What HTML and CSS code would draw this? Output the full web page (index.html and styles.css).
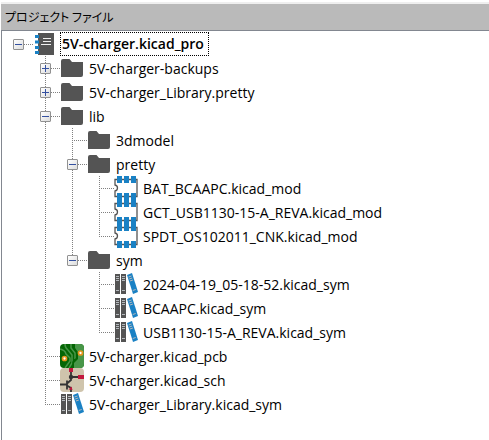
FILE: index.html
```html
<!DOCTYPE html>
<html lang="ja">
<head>
<meta charset="utf-8">
<title>プロジェクト ファイル</title>
<link rel="stylesheet" href="styles.css">
</head>
<body>
<svg class="sprite" aria-hidden="true">
  <symbol id="plus" viewBox="0 0 9 9"><path d="M1 4h7v1H1zM4 1h1v7H4z" fill="#3450a0"/></symbol>
  <symbol id="minus" viewBox="0 0 9 9"><path d="M1 4h7v1H1z" fill="#3450a0"/></symbol>
  <symbol id="folder" viewBox="0 0 24 24"><path d="M1 5q0-2 2-2h6.500l2.500 3H23v13q0 2-2 2H1z" fill="#545454"/></symbol>
  <symbol id="notebook" viewBox="0 0 24 24">
    <path d="M5 1h16v22H5z" fill="#545454"/>
    <path d="M2 3h4v3H2zM2 8.500h4v3H2zM2 14h4v3H2zM2 19h4v3H2z" fill="#1a81c4"/>
    <path d="M10 6.500h8M10 9.500h8M8 12.500h10" stroke="#f0f0f0" fill="none"/>
  </symbol>
  <symbol id="footprint" viewBox="0 0 24 24">
    <path d="M1 3.500h22v17H1V15q2.500-.5 2.500-3T1 9z" fill="#fff" stroke="#545454" stroke-width="1.300"/>
    <path d="M3 0h5v7H3zM10 0h5v7h-5zM17 0h5v7h-5zM3 17h5v7H3zM10 17h5v7h-5zM17 17h5v7h-5z" fill="#1a81c4"/>
  </symbol>
  <symbol id="books" viewBox="0 0 24 24">
    <path d="M1 2h5v20H1zM7 2h5v20H7z" fill="#545454"/>
    <path d="M13 3l5-2 6 19-5 2z" fill="#1a81c4"/>
    <path d="M2 4.500h3M2 6.500h3M2 8.500h3M2 18.500h3M8 4.500h3M8 6.500h3M8 8.500h3M8 18.500h3M14.500 5l3-1M15.200 7l3-1M15.900 9l3-1M18.700 18.500l3-1" stroke="#b4b8bc" fill="none"/>
  </symbol>
  <symbol id="board" viewBox="0 0 24 24">
    <clipPath id="board-edge"><rect width="24" height="24" rx="4"/></clipPath>
    <g clip-path="url(#board-edge)">
      <path d="M0 0h24v24H0z" fill="#056605"/>
      <path d="M24 0H15v4q0 2 2 4l1 2v5l-4 4v5h10z" fill="#489648"/>
      <path d="M0 5q5 1 6 5l4 4v3l-5 7M5 0q0 4 3 6l4 5v8l-3 5M11 0v4l4 5v6" fill="none" stroke="#489648" stroke-width="1.500"/>
      <path d="M14 0v4l3 4v6l-4 4v6" fill="none" stroke="#056605" stroke-width="1.500"/>
      <circle cx="4.500" cy="14.500" r="2" fill="#fff" stroke="#e6951d" stroke-width="1.700"/>
      <circle cx="20.500" cy="9" r="2" fill="#fff" stroke="#e6951d" stroke-width="1.700"/>
    </g>
  </symbol>
  <symbol id="schematic" viewBox="0 0 24 24">
    <rect width="24" height="24" rx="4" fill="#cfc4ac"/>
    <path d="M11 3v9l-4 3.500M11 9h8M0 16.500h7M7 12.500v9M7 17.500l4 2.500v4" fill="none" stroke="#333" stroke-width="1.800"/>
    <circle cx="11" cy="9" r="2.200" fill="#333"/>
    <path d="M9 0h4v4H9zM18 7h6v4h-6zM11.500 18.500l1 3.500-4-.5z" fill="#c2183d"/>
  </symbol>
</svg>

<main class="panel">
  <h1 class="caption">プロジェクト ファイル</h1>
  <ul class="tree">
    <li>
      <div class="row"><span class="stem"><button class="toggle" aria-label="5V-charger.kicad_pro"><svg><use href="#minus"/></svg></button></span><svg class="icon"><use href="#notebook"/></svg><span class="label selected">5V-charger.kicad_pro</span></div>
      <ul>
        <li><div class="row"><span class="stem"><button class="toggle" aria-label="5V-charger-backups"><svg><use href="#plus"/></svg></button></span><svg class="icon"><use href="#folder"/></svg><span class="label">5V-charger-backups</span></div></li>
        <li><div class="row"><span class="stem"><button class="toggle" aria-label="5V-charger_Library.pretty"><svg><use href="#plus"/></svg></button></span><svg class="icon"><use href="#folder"/></svg><span class="label">5V-charger_Library.pretty</span></div></li>
        <li>
          <div class="row"><span class="stem"><button class="toggle" aria-label="lib"><svg><use href="#minus"/></svg></button></span><svg class="icon"><use href="#folder"/></svg><span class="label">lib</span></div>
          <ul>
            <li><div class="row"><span class="stem"></span><svg class="icon"><use href="#folder"/></svg><span class="label">3dmodel</span></div></li>
            <li>
              <div class="row"><span class="stem"><button class="toggle" aria-label="pretty"><svg><use href="#minus"/></svg></button></span><svg class="icon"><use href="#folder"/></svg><span class="label">pretty</span></div>
              <ul>
                <li><div class="row"><span class="stem"></span><svg class="icon"><use href="#footprint"/></svg><span class="label">BAT_BCAAPC.kicad_mod</span></div></li>
                <li><div class="row"><span class="stem"></span><svg class="icon"><use href="#footprint"/></svg><span class="label">GCT_USB1130-15-A_REVA.kicad_mod</span></div></li>
                <li><div class="row"><span class="stem"></span><svg class="icon"><use href="#footprint"/></svg><span class="label">SPDT_OS102011_CNK.kicad_mod</span></div></li>
              </ul>
            </li>
            <li>
              <div class="row"><span class="stem"><button class="toggle" aria-label="sym"><svg><use href="#minus"/></svg></button></span><svg class="icon"><use href="#folder"/></svg><span class="label">sym</span></div>
              <ul>
                <li><div class="row"><span class="stem"></span><svg class="icon"><use href="#books"/></svg><span class="label">2024-04-19_05-18-52.kicad_sym</span></div></li>
                <li><div class="row"><span class="stem"></span><svg class="icon"><use href="#books"/></svg><span class="label">BCAAPC.kicad_sym</span></div></li>
                <li><div class="row"><span class="stem"></span><svg class="icon"><use href="#books"/></svg><span class="label">USB1130-15-A_REVA.kicad_sym</span></div></li>
              </ul>
            </li>
          </ul>
        </li>
        <li><div class="row"><span class="stem"></span><svg class="icon"><use href="#board"/></svg><span class="label">5V-charger.kicad_pcb</span></div></li>
        <li><div class="row"><span class="stem"></span><svg class="icon"><use href="#schematic"/></svg><span class="label">5V-charger.kicad_sch</span></div></li>
        <li><div class="row"><span class="stem"></span><svg class="icon"><use href="#books"/></svg><span class="label">5V-charger_Library.kicad_sym</span></div></li>
      </ul>
    </li>
  </ul>
</main>
</body>
</html>
```
FILE: styles.css
```css
* {
  box-sizing: border-box;
}

body {
  margin: 0;
  background: #fff;
  color: #000;
  font: 14px/20px "Open Sans", "Noto Sans CJK JP", sans-serif;
}

.sprite {
  display: block;
  width: 0;
  height: 0;
}

.panel {
  display: flex;
  flex-direction: column;
  min-height: 100vh;
  padding: 2px 0 0 1px;
}

.caption {
  margin: 0;
  padding: 0 4px;
  border-top: 2px solid #efefef;
  background: #bababa;
  font: 12px/26px "Noto Sans CJK JP", sans-serif;
  font-feature-settings: "palt";
}

.tree {
  flex: 1;
  padding: 1px 4px;
  border-top: 1px solid #828790;
  border-left: 1px solid #828790;
}

ul {
  margin: 0;
  padding: 0;
  list-style: none;
}

ul ul {
  padding-left: 27px;
}

/* Dotted guide that runs down beside the siblings */
ul ul > li {
  background: repeating-linear-gradient(#808080 0 1px, transparent 1px 2px) 12px 0 / 1px 100% no-repeat;
}

ul ul > li:last-child {
  background-size: 1px 12px;
}

.row {
  display: flex;
  align-items: center;
  height: 24px;
}

.stem {
  display: flex;
  align-items: center;
  width: 27px;
  height: 24px;
  padding: 1px 0 0 7px;
  background: repeating-linear-gradient(90deg, #808080 0 1px, transparent 1px 2px) 12px 12px / 15px 1px no-repeat;
}

.toggle {
  width: 11px;
  height: 11px;
  padding: 0;
  border: 1px solid #919191;
  border-radius: 1px;
  background: linear-gradient(135deg, #fff, #dcdcdc);
}

.toggle svg {
  display: block;
  width: 9px;
  height: 9px;
}

.icon {
  flex: none;
  width: 24px;
  height: 24px;
}

.label {
  padding: 2px 5px 0;
  white-space: nowrap;
}

.selected {
  margin-left: 3px;
  padding: 1px 4px 1px 1px;
  border: 1px dotted #000;
  font-weight: 600;
  line-height: 20px;
}
```
